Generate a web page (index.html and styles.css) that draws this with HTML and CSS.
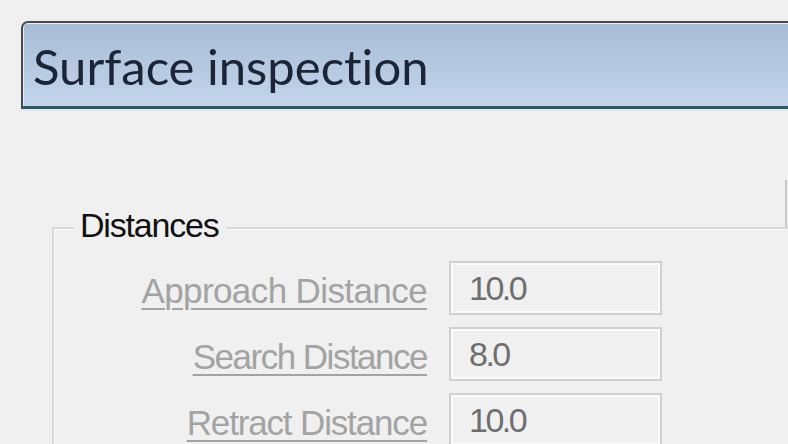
FILE: index.html
```html
<!DOCTYPE html>
<html>
<head>
<meta charset="utf-8">
<link rel="stylesheet" href="styles.css">
</head>
<body>
  <div class="page">
    <div class="titlebar"><span class="title">Surface inspection</span></div>
    <div class="upper">
      <div class="side-panel"></div>
    </div>
    <div class="group">
      <div class="legend">Distances</div>
      <div class="rows">
        <label class="lbl">Approach Distance</label>
        <div class="field">10.0</div>
        <label class="lbl lbl-tight">Search Distance</label>
        <div class="field">8.0</div>
        <label class="lbl lbl-mid">Retract Distance</label>
        <div class="field">10.0</div>
      </div>
    </div>
  </div>
</body>
</html>
```

FILE: styles.css
```css
html, body {
  margin: 0;
  padding: 0;
  background: #f0f0f0;
  overflow: hidden;
}

.page {
  width: 788px;
  height: 444px;
  overflow: hidden;
  padding-top: 21px;
  box-sizing: border-box;
}

.titlebar {
  margin-left: 21px;
  height: 88px;
  box-sizing: border-box;
  border-top: 2px solid #4a4a4a;
  border-left: 2px solid #4a4a4a;
  border-bottom: 3px solid #2f5866;
  border-top-left-radius: 7px;
  background: linear-gradient(#a7bbd6, #c3d5eb);
  box-shadow: inset 0 1px 0 #e8eef6, inset 1px 0 0 #e8eef6, 0 2px 0 #dfe8f0;
  display: flex;
  align-items: center;
  padding-left: 10px;
  padding-top: 3px;
}

.title {
  font-family: Lato, "Open Sans", sans-serif;
  font-size: 49px;
  color: #1b2536;
  font-variant-ligatures: none;
}

.upper {
  height: 118px;
  display: flex;
  justify-content: flex-end;
  align-items: flex-end;
}

.side-panel {
  width: 1px;
  height: 47px;
  border-left: 2px solid #c9c9c9;
}

.group {
  margin-left: 52px;
  border-top: 2px solid #dadada;
  border-left: 2px solid #dadada;
  box-shadow: inset 0 1px 0 #fafafa, inset 1px 0 0 #fafafa;
  height: 300px;
}

.legend {
  width: fit-content;
  height: 39px;
  line-height: 39px;
  margin: -23px 0 0 20px;
  padding: 0 8px 0 6px;
  background: #f0f0f0;
  font-family: "Liberation Sans", Arial, sans-serif;
  font-size: 34px;
  letter-spacing: -1.2px;
  color: #111;
}

.rows {
  display: grid;
  grid-template-columns: 373px 213px;
  column-gap: 22px;
  row-gap: 12px;
  margin-top: 16px;
  align-items: start;
}

.lbl {
  height: 54px;
  box-sizing: border-box;
  padding-top: 6px;
  line-height: 48px;
  font-family: "Liberation Sans", Arial, sans-serif;
  font-size: 35px;
  color: #a3a3a3;
  text-align: right;
  text-decoration: underline;
  text-decoration-thickness: 2px;
  text-underline-offset: 5px;
  letter-spacing: -0.6px;
  white-space: nowrap;
}

.lbl-tight {
  letter-spacing: -1.5px;
}

.lbl-mid {
  letter-spacing: -1.15px;
}

.field {
  height: 54px;
  box-sizing: border-box;
  border: 2px solid #d0d0d0;
  box-shadow: inset 0 0 0 2px #fbfbfb;
  background: #f0f0f0;
  font-family: "Liberation Sans", Arial, sans-serif;
  font-size: 34px;
  line-height: 39px;
  letter-spacing: -2.5px;
  color: #6e6e6e;
  padding: 6px 0 0 18px;
}
```
